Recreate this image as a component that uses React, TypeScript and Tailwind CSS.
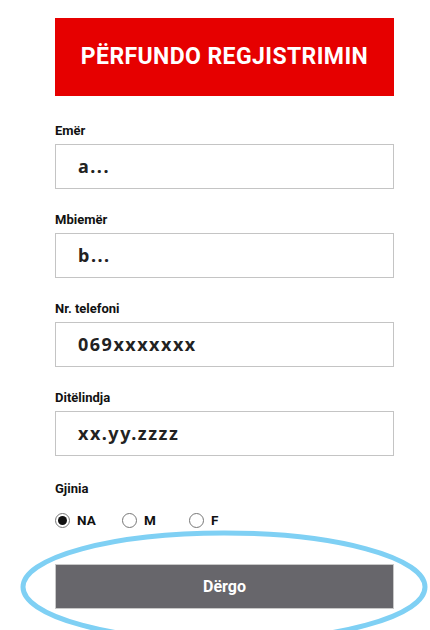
import React from 'react';

const fields = [
  { label: 'Emër', value: 'a...' },
  { label: 'Mbiemër', value: 'b...' },
  { label: 'Nr. telefoni', value: '069xxxxxxx' },
  { label: 'Ditëlindja', value: 'xx.yy.zzzz' },
];

const genders = ['NA', 'M', 'F'];

export default function App() {
  return (
    <div className="relative w-[430px] h-[630px] overflow-hidden bg-white font-['Roboto','Liberation_Sans',sans-serif]">
      <div className="pl-[55px] pr-[36px] pt-[18px]">
        <div className="h-[78px] bg-[#e60000] flex items-center justify-center">
          <h1 className="text-white font-bold text-[23px] tracking-[0.4px]">PËRFUNDO REGJISTRIMIN</h1>
        </div>

        <div className="mt-[27px] flex flex-col gap-[23px]">
          {fields.map((f) => (
            <div key={f.label}>
              <label className="block h-[16px] leading-[16px] text-[13px] font-bold text-[#111]">{f.label}</label>
              <div className="mt-[5px] h-[45px] border border-[#c4c4c4] flex items-center px-[22px]">
                <span className="font-['Noto_Sans','Open_Sans',sans-serif] font-bold text-[18px] tracking-[1.5px] text-[#222]">
                  {f.value}
                </span>
              </div>
            </div>
          ))}
        </div>

        <div className="mt-[25px]">
          <div className="h-[16px] leading-[16px] text-[13px] font-bold text-[#111]">Gjinia</div>
          <div className="mt-[13px] flex items-center gap-[25px]">
            {genders.map((g, i) => (
              <label key={g} className="flex items-center gap-[7px] w-[42px]">
                <span className="w-[15px] h-[15px] rounded-full border border-[#777] flex items-center justify-center shrink-0">
                  {i === 0 && <span className="w-[9px] h-[9px] rounded-full bg-[#111]" />}
                </span>
                <span className="text-[13.5px] font-bold text-[#111]">{g}</span>
              </label>
            ))}
          </div>
        </div>

        <button className="mt-[34px] w-full h-[45px] bg-[#67666b] border border-[#c8c8c8] text-white text-[16px] font-bold">
          Dërgo
        </button>
      </div>

      <svg className="absolute left-[20px] top-[530px] pointer-events-none" width="410" height="115" viewBox="0 0 410 115">
        <ellipse cx="204" cy="57" rx="201" ry="54" fill="none" stroke="#7fd0f4" strokeWidth="5" />
      </svg>
    </div>
  );
}
